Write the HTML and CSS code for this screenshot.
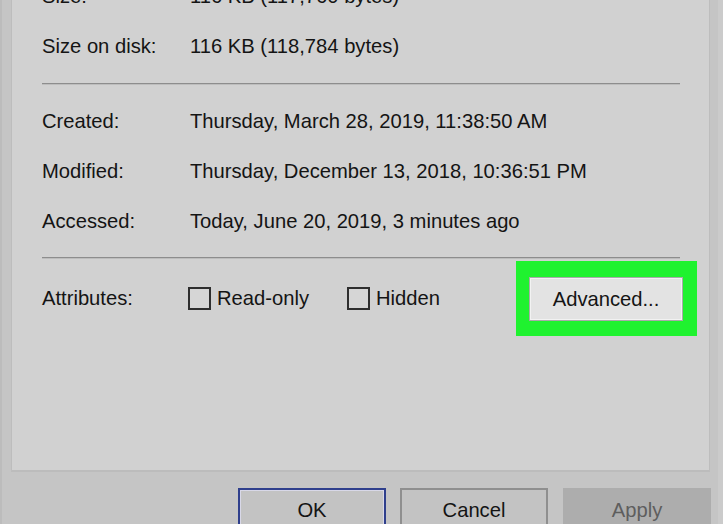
FILE: index.html
```html
<!DOCTYPE html>
<html lang="en">
<head>
<meta charset="utf-8">
<title>Properties</title>
<link rel="stylesheet" href="styles.css">
</head>
<body>
<div class="window">
  <div class="panel">
    <div class="row first"><span class="label">Size:</span><span class="value">116 KB (117,760 bytes)</span></div>
    <div class="row"><span class="label">Size on disk:</span><span class="value">116 KB (118,784 bytes)</span></div>
    <div class="sep sep-a"></div>
    <div class="row"><span class="label">Created:</span><span class="value">Thursday, March 28, 2019, 11:38:50 AM</span></div>
    <div class="row"><span class="label">Modified:</span><span class="value">Thursday, December 13, 2018, 10:36:51 PM</span></div>
    <div class="row"><span class="label">Accessed:</span><span class="value">Today, June 20, 2019, 3 minutes ago</span></div>
    <div class="sep sep-b"></div>
    <div class="attrs">
      <span class="label">Attributes:</span>
      <label class="check"><span class="box"></span>Read-only</label>
      <label class="check"><span class="box"></span>Hidden</label>
      <div class="highlight"><button class="btn-adv" type="button">Advanced...</button></div>
    </div>
  </div>
  <div class="actions">
    <button class="btn btn-default" type="button">OK</button>
    <button class="btn" type="button">Cancel</button>
    <button class="btn btn-disabled" type="button">Apply</button>
  </div>
</div>
</body>
</html>
```
FILE: styles.css
```css
html, body {
  margin: 0;
  padding: 0;
  height: 100%;
  overflow: hidden;
}

body {
  font-family: "Liberation Sans", Arial, sans-serif;
  font-size: 20.2px;
  color: #141414;
  background: #c6c6c6;
}

.window {
  height: 100%;
  box-sizing: border-box;
  padding: 0 8px 0 9px;
  border-left: 2px solid #bcbcbc;
  border-right: 5px solid #cbcbcb;
  background: #c5c5c5;
}

.panel {
  background: #d1d1d1;
  border-left: 1px solid #bdbdbd;
  border-right: 1px solid #bdbdbd;
  border-bottom: 2px solid #bcbcbc;
  padding: 0 29px 132px 30px;
  display: flex;
  flex-direction: column;
}

.row {
  display: flex;
  height: 50px;
  align-items: center;
}

.row.first {
  margin-top: -29px;
}

.label {
  width: 148px;
  flex: none;
}

.sep {
  height: 1px;
  background: #8d8d8d;
  border-bottom: 1px solid #bdbdbd;
}

.sep-a {
  margin: 12px 0 11px;
}

.sep-b {
  margin: 11px 0 2px;
}

.attrs {
  display: flex;
  align-items: center;
  height: 75px;
  padding-bottom: 2px;
}

.attrs .label {
  width: 146px;
}

.check {
  display: flex;
  align-items: center;
  gap: 6px;
  margin-right: 38px;
}

.box {
  width: 19px;
  height: 19px;
  border: 2px solid #2e2e2e;
  background: #d6d6d6;
}

.highlight {
  margin-left: auto;
  margin-right: -17px;
  background: #1ff22f;
  padding: 16px 14px 15px 13px;
  display: flex;
}

.btn-adv {
  width: 154px;
  height: 44px;
  font: inherit;
  color: #141414;
  background: #e3e3e3;
  border: 1px solid #a9a9a9;
  box-shadow: inset 0 0 0 1px #f2f2f2;
  padding: 0;
}

.actions {
  display: flex;
  justify-content: flex-end;
  gap: 14px;
  margin: 16px -1px 0 0;
}

.btn {
  width: 148px;
  height: 45px;
  font: inherit;
  color: #141414;
  background: #c3c3c3;
  border: 2px solid #8f8f8f;
  padding: 0;
}

.btn-default {
  border-color: #2f3f8c;
  box-shadow: inset 0 0 0 1px #d8d8e8;
}

.btn-disabled {
  margin-left: 1px;
  background: #adadad;
  border-color: #adadad;
  color: #5e5e5e;
}
```
